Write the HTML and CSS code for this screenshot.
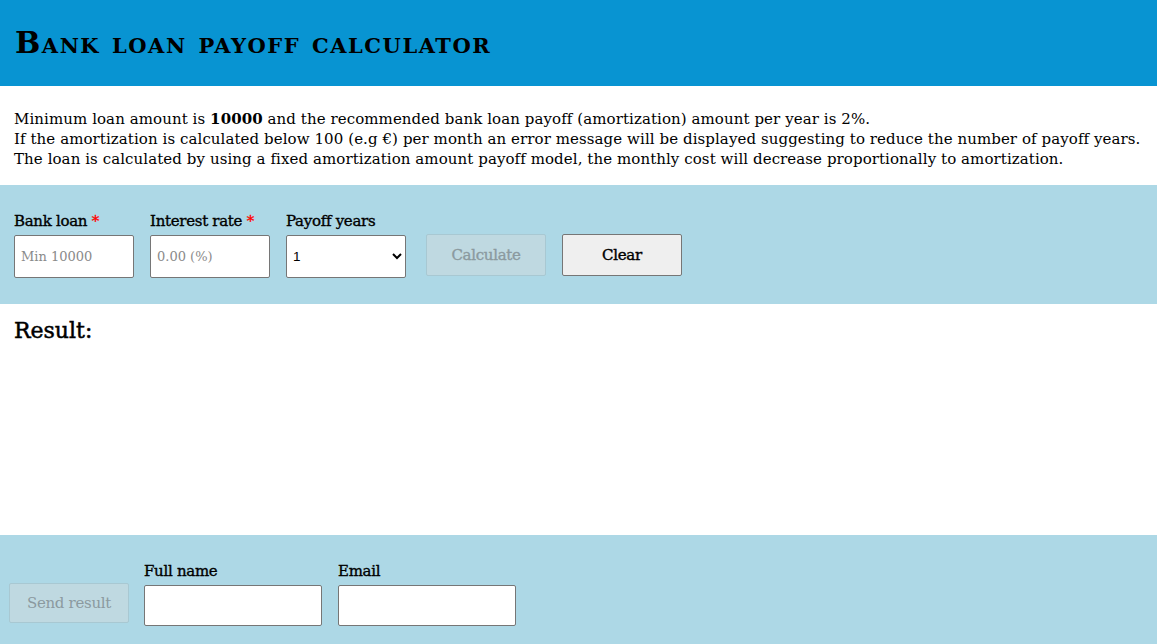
FILE: index.html
```html
<!DOCTYPE html>
<html lang="en">
<head>
<meta charset="utf-8">
<title>Bank loan payoff calculator</title>
<link rel="stylesheet" href="styles.css">
</head>
<body>
<header class="header">
  <h1 class="title">Bank loan payoff calculator</h1>
</header>
<section class="intro">
  <p>Minimum loan amount is <b>10000</b> and the recommended bank loan payoff (amortization) amount per year is 2%.<br>
  If the amortization is calculated below 100 (e.g €) per month an error message will be displayed suggesting to reduce the number of payoff years.<br>
  The loan is calculated by using a fixed amortization amount payoff model, the monthly cost will decrease proportionally to amortization.</p>
</section>
<section class="form-bar">
  <div class="field">
    <label class="label">Bank loan <span class="req">*</span></label>
    <input class="input" type="text" placeholder="Min 10000">
  </div>
  <div class="field">
    <label class="label">Interest rate <span class="req">*</span></label>
    <input class="input" type="text" placeholder="0.00 (%)">
  </div>
  <div class="field">
    <label class="label">Payoff years</label>
    <select class="select"><option>1</option></select>
  </div>
  <button class="btn btn-disabled btn-calc" disabled>Calculate</button>
  <button class="btn btn-clear">Clear</button>
</section>
<section class="result">
  <h2 class="result-title">Result:</h2>
</section>
<section class="send-bar">
  <button class="btn btn-disabled btn-send" disabled>Send result</button>
  <div class="field">
    <label class="label">Full name</label>
    <input class="input input-wide" type="text">
  </div>
  <div class="field">
    <label class="label">Email</label>
    <input class="input input-wide" type="text">
  </div>
</section>
</body>
</html>
```

FILE: styles.css
```css
html, body {
  margin: 0;
  padding: 0;
  background: #ffffff;
  color: #111;
  font-family: "DejaVu Serif", "Liberation Serif", serif;
}
.header {
  background: #0894d2;
  height: 86px;
  display: flex;
  align-items: center;
  padding: 0 15px;
}
.title {
  margin: 0 0 2px;
  font-variant: small-caps;
  font-size: 30px;
  font-weight: bold;
  letter-spacing: 1.5px;
  color: #000;
}
.intro {
  padding: 23px 0 16px 14px;
}
.intro p {
  margin: 0;
  font-size: 15px;
  line-height: 20px;
  letter-spacing: 0.08px;
  color: #000;
  white-space: nowrap;
}
.form-bar {
  background: #add8e6;
  height: 119px;
  box-sizing: border-box;
  padding: 26px 14px 0;
  display: flex;
  align-items: flex-start;
  gap: 16px;
}
.field {
  display: flex;
  flex-direction: column;
}
.label {
  font-size: 15px;
  height: 24px;
  line-height: 20px;
  letter-spacing: -0.3px;
  color: #000;
  -webkit-text-stroke: 0.35px #000;
}
.req { color: #f00; -webkit-text-stroke: 0.35px #f00; }
.input, .select {
  width: 120px;
  height: 43px;
  box-sizing: border-box;
  border: 1px solid #767676;
  border-radius: 2px;
  background: #fff;
  font-family: inherit;
  font-size: 13px;
  padding: 0 6px;
}
.select {
  font-family: "Liberation Sans", sans-serif;
  font-size: 13.5px;
  padding: 0 2px;
  color: #000;
}
.input::placeholder { color: #8a8a8a; }
.btn {
  width: 120px;
  height: 42px;
  box-sizing: border-box;
  border-radius: 2px;
  font-family: inherit;
  font-size: 15px;
  letter-spacing: -0.3px;
}
.btn-calc {
  margin-top: 23px;
  margin-left: 4px;
  -webkit-text-stroke: 0.35px #8b9a9f;
}
.btn-clear {
  margin-top: 23px;
  background: #efefef;
  border: 1px solid #767676;
  color: #000;
  -webkit-text-stroke: 0.4px #000;
}
.btn-disabled {
  background: #bfd9e1;
  border: 1px solid #a8c8d2;
  color: #8b9a9f;
}
.result {
  height: 231px;
  padding: 14px 14px 0;
  box-sizing: border-box;
}
.result-title {
  margin: 0;
  font-size: 22px;
  font-weight: normal;
  color: #000;
  -webkit-text-stroke: 0.5px #000;
}
.send-bar {
  background: #add8e6;
  height: 109px;
  box-sizing: border-box;
  padding: 26px 9px 0;
  display: flex;
  align-items: flex-start;
  gap: 16px;
}
.btn-send {
  margin-top: 22px;
  height: 40px;
  margin-right: -1px;
}
.input-wide { width: 178px; height: 41px; }
```
